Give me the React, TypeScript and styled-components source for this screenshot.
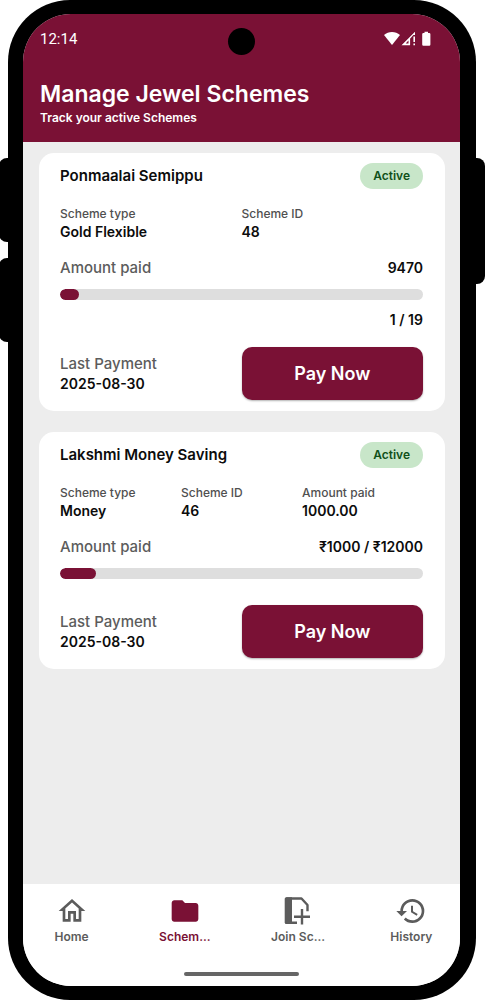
import React from "react";
import styled, { createGlobalStyle } from "styled-components";
import { MdFolder, MdHistory, MdOutlineHome } from "react-icons/md";

const wine = "#7a1135";

const GlobalStyle = createGlobalStyle`
  *, *::before, *::after { box-sizing: border-box; }
  body {
    margin: 0;
    background: #fff;
    color: #0c0c0c;
    font-family: Inter, "Noto Sans", sans-serif;
    font-weight: 500;
  }
`;

const Stage = styled.div`
  padding: 0 9px 0 8px;
`;

const Phone = styled.div`
  position: relative;
  display: flex;
  flex-direction: column;
  min-height: 100vh;
  padding: 14px 16px 14px 15px;
  border-radius: 62px;
  background: #000;
`;

const SideKey = styled.span<{ $side: "left" | "right"; $top: number; $height: number }>`
  position: absolute;
  top: ${(p) => p.$top}px;
  ${(p) => p.$side}: -9px;
  width: 18px;
  height: ${(p) => p.$height}px;
  border-radius: 8px;
  background: #000;
`;

const Screen = styled.div`
  position: relative;
  display: flex;
  flex: 1;
  flex-direction: column;
  overflow: hidden;
  border-radius: 48px;
  background: #ededed;
`;

const Header = styled.header`
  height: 128px;
  padding: 15px 29px 0 17px;
  background: ${wine};
  color: #fff;
`;

const StatusBar = styled.div`
  display: flex;
  align-items: center;
  justify-content: space-between;
  height: 20px;
  font: 400 15px/20px Roboto, sans-serif;
`;

const Camera = styled.span`
  position: absolute;
  top: 14px;
  left: 50%;
  width: 27px;
  height: 27px;
  margin-left: -14px;
  border-radius: 50%;
  background: #000;
`;

const Title = styled.h1`
  margin: 29px 0 0;
  font-size: 23px;
  font-weight: 600;
  line-height: 32px;
`;

const Subtitle = styled.p`
  margin: 0;
  font-size: 12px;
  font-weight: 600;
  line-height: 16px;
`;

const SchemeList = styled.main`
  display: flex;
  flex: 1;
  flex-direction: column;
  gap: 21px;
  padding: 11px 15px 22px 16px;
`;

const Card = styled.article`
  padding: 10px 22px 11px 21px;
  border-radius: 15px;
  background: #fff;
`;

const SplitRow = styled.div`
  display: flex;
  align-items: center;
  justify-content: space-between;
`;

const SchemeName = styled.h2`
  margin: 0;
  font-size: 15px;
  font-weight: 600;
  line-height: 20px;
`;

const StatusPill = styled.span`
  padding: 0 13px;
  border-radius: 13px;
  background: #c8e6c9;
  color: #10501a;
  font-size: 12px;
  font-weight: 600;
  line-height: 26px;
`;

const Facts = styled.dl<{ $columns: number }>`
  display: grid;
  grid-template-columns: repeat(${(p) => p.$columns}, 1fr);
  margin: 16px 0 17px;
`;

const FactLabel = styled.dt`
  color: #505050;
  font-size: 12px;
  line-height: 18px;
`;

const FactValue = styled.dd`
  margin: 0;
  font-size: 14px;
  font-weight: 600;
  line-height: 18px;
`;

const Caption = styled.span`
  color: #5c5c5c;
  font-size: 15px;
  line-height: 20px;
`;

const Figure = styled.span`
  font-size: 14px;
  font-weight: 600;
  line-height: 20px;
`;

const Track = styled.div`
  height: 11px;
  margin-top: 11px;
  overflow: hidden;
  border-radius: 6px;
  background: #dedede;
`;

const Fill = styled.div`
  height: 100%;
  border-radius: 6px;
  background: ${wine};
`;

const Instalments = styled.div`
  display: flex;
  justify-content: flex-end;
  margin-top: 10px;
`;

const PaymentRow = styled.div<{ $spaced: boolean }>`
  display: grid;
  grid-template-columns: 1fr 1fr;
  align-items: center;
  margin-top: ${(p) => (p.$spaced ? 26 : 17)}px;
`;

const LastPayment = styled.div`
  display: flex;
  flex-direction: column;
`;

const PayButton = styled.button`
  height: 53px;
  border: 0;
  border-radius: 10px;
  background: ${wine};
  box-shadow: 0 1px 2px rgba(0, 0, 0, 0.3);
  color: #fff;
  font: inherit;
  font-size: 18px;
  font-weight: 600;
  cursor: pointer;
`;

const NavBar = styled.nav`
  display: grid;
  grid-template-columns: repeat(4, 1fr);
  gap: 16px;
  height: 88px;
  padding-top: 11px;
  background: #fff;
`;

const NavLink = styled.a<{ $active: boolean }>`
  display: flex;
  flex-direction: column;
  align-items: center;
  color: ${(p) => (p.$active ? wine : "#5c5c5c")};
  font-size: 12px;
  font-weight: 600;
  line-height: 18px;
  text-decoration: none;

  svg { margin-bottom: 1px; }
`;

const GestureArea = styled.div`
  height: 14px;
  background: #fff;
`;

const GestureBar = styled.div`
  width: 115px;
  height: 4px;
  margin: 0 auto;
  border-radius: 2px;
  background: #666;
`;

const StatusIcons = () => (
  <svg width="47" height="16" viewBox="0 0 47 16" fill="#fff" aria-label="Wi-Fi, mobile signal, battery">
    <path d="M0 4.1C4.4 0 11.600 0 16 4.100L8 14Z" />
    <path d="M17.500 14.300 31 .8V4H29.400L21.700 12.600H24.500V8L26.100 6.300V14.300Z" />
    <path d="M29.400 5.500H31v5.500h-1.600zM29.400 12.500H31v1.800h-1.600z" />
    <path d="M40.500 .8h3.500v1.300h1.200q1.200 0 1.200 1.200v10.200q0 1.200-1.200 1.200h-5.800q-1.200 0-1.200-1.200V3.300q0-1.200 1.200-1.200h1.100z" />
  </svg>
);

const JoinIcon = () => (
  <svg width="32" height="32" viewBox="0 0 32 32" fill="none" stroke="currentColor" strokeWidth="2.4" aria-hidden="true">
    <path d="M4.300 3.500H19.500L25.500 10V16.300M4.300 27.700H15" strokeLinejoin="round" />
    <path d="M20 14V29.500M12 21.700H28" />
    <path d="M4.200 2.300h5.800v26.600H4.200q-1.500 0-1.500-1.500V3.800q0-1.500 1.500-1.500z" fill="currentColor" stroke="none" />
  </svg>
);

type Scheme = {
  name: string;
  facts: [string, string][];
  paid: string;
  percent: number;
  instalments?: string;
  lastPayment: string;
};

const schemes: Scheme[] = [
  {
    name: "Ponmaalai Semippu",
    facts: [["Scheme type", "Gold Flexible"], ["Scheme ID", "48"]],
    paid: "9470",
    percent: 5.26,
    instalments: "1 / 19",
    lastPayment: "2025-08-30",
  },
  {
    name: "Lakshmi Money Saving",
    facts: [["Scheme type", "Money"], ["Scheme ID", "46"], ["Amount paid", "1000.00"]],
    paid: "₹1000 / ₹12000",
    percent: 10,
    lastPayment: "2025-08-30",
  },
];

const tabs = [
  { label: "Home", icon: <MdOutlineHome size={32} /> },
  { label: "Schem...", icon: <MdFolder size={32} />, active: true },
  { label: "Join Sc...", icon: <JoinIcon /> },
  { label: "History", icon: <MdHistory size={32} /> },
];

const SchemeCard = ({ scheme }: { scheme: Scheme }) => (
  <Card>
    <SplitRow>
      <SchemeName>{scheme.name}</SchemeName>
      <StatusPill>Active</StatusPill>
    </SplitRow>
    <Facts $columns={scheme.facts.length}>
      {scheme.facts.map(([label, value]) => (
        <div key={label}>
          <FactLabel>{label}</FactLabel>
          <FactValue>{value}</FactValue>
        </div>
      ))}
    </Facts>
    <SplitRow>
      <Caption>Amount paid</Caption>
      <Figure>{scheme.paid}</Figure>
    </SplitRow>
    <Track role="progressbar" aria-label="Amount paid" aria-valuenow={scheme.percent} aria-valuemin={0} aria-valuemax={100}>
      <Fill style={{ width: `${scheme.percent}%` }} />
    </Track>
    {scheme.instalments && (
      <Instalments>
        <Figure>{scheme.instalments}</Figure>
      </Instalments>
    )}
    <PaymentRow $spaced={!scheme.instalments}>
      <LastPayment>
        <Caption>Last Payment</Caption>
        <Figure>{scheme.lastPayment}</Figure>
      </LastPayment>
      <PayButton type="button">Pay Now</PayButton>
    </PaymentRow>
  </Card>
);

export default function App() {
  return (
    <Stage>
      <GlobalStyle />
      <Phone>
        <SideKey $side="left" $top={158} $height={84} />
        <SideKey $side="left" $top={258} $height={84} />
        <SideKey $side="right" $top={158} $height={126} />
        <Screen>
          <Header>
            <StatusBar>
              <span>12:14</span>
              <StatusIcons />
            </StatusBar>
            <Camera />
            <Title>Manage Jewel Schemes</Title>
            <Subtitle>Track your active Schemes</Subtitle>
          </Header>
          <SchemeList>
            {schemes.map((scheme) => (
              <SchemeCard key={scheme.name} scheme={scheme} />
            ))}
          </SchemeList>
          <NavBar>
            {tabs.map((tab) => (
              <NavLink key={tab.label} href="#" $active={!!tab.active}>
                {tab.icon}
                {tab.label}
              </NavLink>
            ))}
          </NavBar>
          <GestureArea>
            <GestureBar />
          </GestureArea>
        </Screen>
      </Phone>
    </Stage>
  );
}
